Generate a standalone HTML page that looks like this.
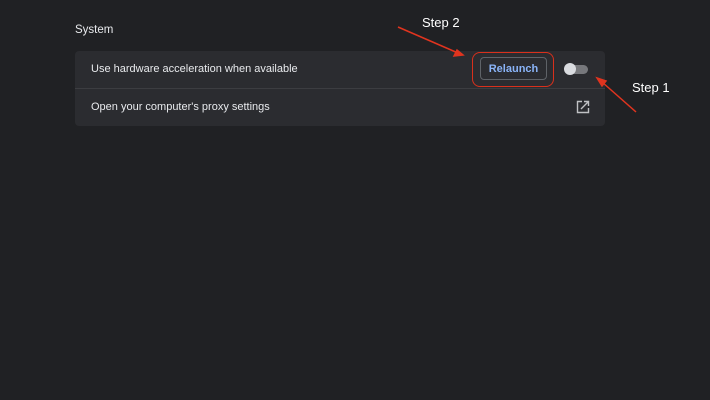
<!DOCTYPE html>
<html><head><style>
body{margin:0;width:710px;height:400px;background:#202124;font-family:"Liberation Sans",sans-serif;position:relative;overflow:hidden}
.t{position:absolute;color:#e8eaed}
.card{position:absolute;left:75px;top:51px;width:530px;height:75px;background:#2b2c30;border-radius:4px}
.div{position:absolute;left:75px;top:88px;width:530px;height:1px;background:#3c3d41}
.btn{position:absolute;left:480px;top:57px;width:67px;height:23px;border:1px solid #5f6368;border-radius:4px;color:#8ab4f8;font-size:11px;font-weight:bold;text-align:center;line-height:23px;box-sizing:border-box}
</style></head><body>
<div class="t" style="left:75px;top:24px;font-size:11.5px">System</div>
<div class="card"></div><div class="div"></div>
<div class="t" style="left:91px;top:63px;font-size:11px">Use hardware acceleration when available</div>
<div class="t" style="left:91px;top:101px;font-size:11px">Open your computer's proxy settings</div>
<div class="btn">Relaunch</div>
<div style="position:absolute;left:472px;top:52px;width:82px;height:35px;border:1.5px solid #d9301c;border-radius:8px;box-sizing:border-box"></div>
<div style="position:absolute;left:566px;top:65px;width:22px;height:9px;border-radius:5px;background:#77787c"></div>
<div style="position:absolute;left:564px;top:63px;width:12px;height:12px;border-radius:6px;background:#dadce0"></div>
<svg style="position:absolute;left:0;top:0" width="710" height="400">
<g fill="none" stroke="#c0c1c4" stroke-width="1.4"><path d="M582 101.5h-4.5v11h11v-4.5M581 109l7.5-7.5M584 101.5h4.5v4.5"/></g>
<g stroke="#e0341f" stroke-width="1.5" fill="#e0341f">
<line x1="398" y1="27" x2="458" y2="53"/><path d="M463 55l-9 1 3-6z"/>
<line x1="636" y1="112" x2="602" y2="82"/><path d="M597 78l9 3-4 5z"/>
</g>
<text x="422" y="27" fill="#fff" font-size="13" font-family="Liberation Sans">Step 2</text>
<text x="632" y="92" fill="#fff" font-size="13" font-family="Liberation Sans">Step 1</text>
</svg>
</body></html>
